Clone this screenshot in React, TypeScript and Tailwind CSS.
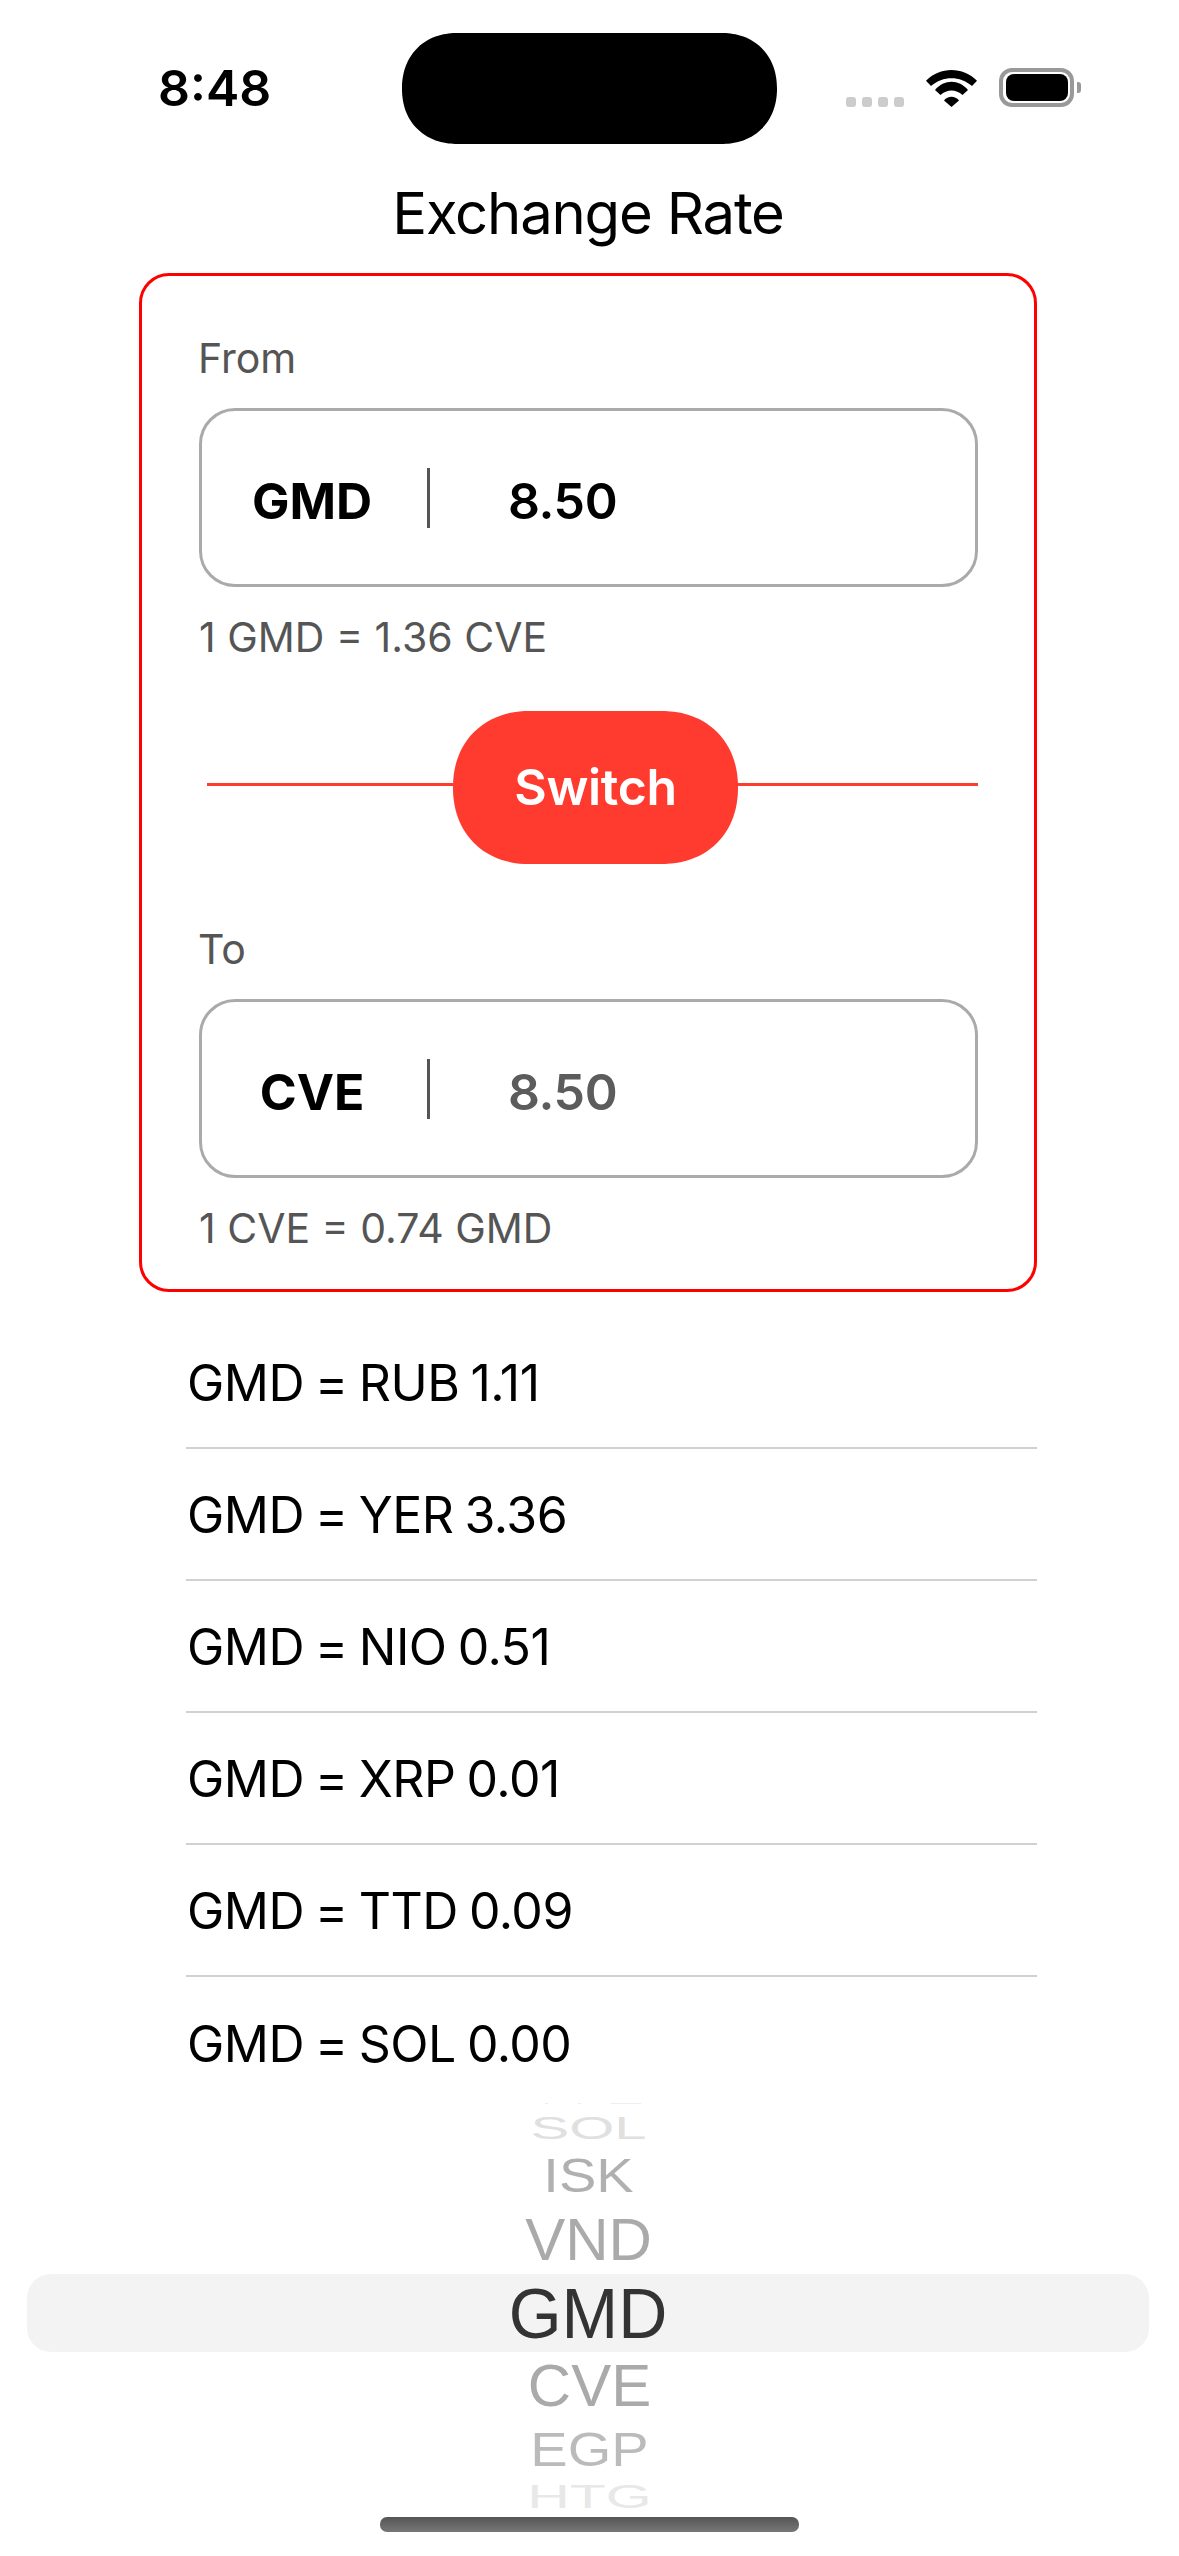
const font = { fontFamily: "Inter, 'Noto Sans', sans-serif" };

const rates = [
  "GMD = RUB 1.11",
  "GMD = YER 3.36",
  "GMD = NIO 0.51",
  "GMD = XRP 0.01",
  "GMD = TTD 0.09",
  "GMD = SOL 0.00",
];

function StatusBar() {
  return (
    <div className="flex h-[144px] shrink-0 items-start pt-[33px]">
      <div className="ml-[158px] w-[244px] pt-[32px] text-[50px] leading-[46px] font-semibold text-black">8:48</div>
      <div className="h-[111px] w-[375px] rounded-[55px] bg-black [corner-shape:superellipse(1.1)]" />
      <div className="flex items-end pt-[35px]">
        <div className="ml-[69px] flex gap-[6px]">
          <span className="h-[10px] w-[10px] rounded-[3px] bg-[#cccccc]" />
          <span className="h-[10px] w-[10px] rounded-[3px] bg-[#cccccc]" />
          <span className="h-[10px] w-[10px] rounded-[3px] bg-[#cccccc]" />
          <span className="h-[10px] w-[10px] rounded-[3px] bg-[#cccccc]" />
        </div>
        <svg className="ml-[22px]" width="51" height="37" viewBox="0 0 51 37" fill="black">
          <path d="M0 10.7C14 -3.5 37 -3.5 51 10.7L46 16C34 5.5 17 5.5 5 16Z" />
          <path d="M9 20C18 9 33 9 42 20L36.5 25C30 19 21 19 14.5 25Z" />
          <path d="M18 30.5C22 25.5 29 25.5 33 30.5L25.5 37Z" />
        </svg>
        <div className="ml-[22px] flex items-center">
          <div className="flex h-[39px] w-[75px] items-center justify-center rounded-[13px] border-[4px] border-[#999999]">
            <div className="h-[27px] w-[62px] rounded-[8px] bg-black" />
          </div>
          <div className="ml-[3px] h-[11px] w-[4px] rounded-r-[3px] bg-[#999999]" />
        </div>
      </div>
    </div>
  );
}

function CurrencyField({
  label,
  code,
  value,
  rate,
  valueClass,
}: {
  label: string;
  code: string;
  value: string;
  rate: string;
  valueClass: string;
}) {
  return (
    <div>
      <div className="-ml-[1px] h-[48px] text-[41px] leading-[48px] text-[#555555]">{label}</div>
      <div className="mt-[26px] -mr-[1px] flex h-[179px] items-center rounded-[36px] border-[3px] border-[#aaaaaa]">
        <div className="w-[220px] pt-[7px] text-center text-[50px] font-bold text-black">{code}</div>
        <div className="ml-[5px] h-[60px] w-[3px] bg-[#555555]" />
        <div className={`ml-[78px] pt-[7px] text-[50px] font-semibold tracking-[-0.4px] ${valueClass}`}>{value}</div>
      </div>
      <div className="mt-[26px] h-[48px] text-[41px] leading-[48px] text-[#555555]">{rate}</div>
    </div>
  );
}

function Picker() {
  return (
    <div className="-mt-[6px] flex shrink-0 flex-col font-['Liberation_Sans']">
      <div className="flex h-[1px] justify-center gap-[30px] pl-[6px]">
        <span className="w-[3px] bg-[#eeeeee]" />
        <span className="w-[3px] bg-[#eeeeee]" />
        <span className="w-[30px] bg-[#eeeeee]" />
      </div>
      <div className="flex h-[47px] items-center justify-center pr-[2px] text-[#e0e0e0]">
        <span className="inline-block scale-y-[0.55] text-[58px] leading-none">SOL</span>
      </div>
      <div className="flex h-[48px] items-center justify-center pr-[2px] text-[#b0b0b0]">
        <span className="inline-block scale-y-[0.87] text-[56px] leading-none">ISK</span>
      </div>
      <div className="flex h-[74.5px] items-center justify-center pt-[6.5px] pr-[2px] text-[#aaaaaa]">
        <span className="inline-block text-[60px] leading-none">VND</span>
      </div>
      <div className="mr-[30px] ml-[27px] flex h-[78px] items-center justify-center rounded-[24px] bg-[#f3f3f3] text-[#333333]">
        <span className="inline-block scale-y-[1.03] text-[68px] leading-none">GMD</span>
      </div>
      <div className="flex h-[74.5px] items-center justify-center pb-[6.5px] text-[#aaaaaa]">
        <span className="inline-block text-[60px] leading-none">CVE</span>
      </div>
      <div className="flex h-[47px] items-center justify-center text-[#bbbbbb]">
        <span className="inline-block scale-y-[0.85] text-[56px] leading-none">EGP</span>
      </div>
      <div className="flex h-[49px] items-center justify-center text-[#e8e8e8]">
        <span className="inline-block scale-y-[0.55] text-[59px] leading-none">HTG</span>
      </div>
    </div>
  );
}

export default function App() {
  return (
    <div className="relative flex h-[2556px] w-[1179px] flex-col overflow-hidden bg-white" style={font}>
      <StatusBar />

      <div className="flex h-[129px] shrink-0 items-center justify-center pt-[8px] pr-[3px] text-[58px] leading-none tracking-[-1.2px] text-black">
        Exchange Rate
      </div>

      <div className="ml-[139px] h-[1019px] w-[898px] shrink-0 rounded-[30px] border-[3px] border-[#ff0000] px-[57px] pt-[58px]">
        <CurrencyField label="From" code="GMD" value="8.50" rate="1 GMD = 1.36 CVE" valueClass="text-black" />

        <div className="mt-[50px] -mr-[1px] ml-[8px] flex h-[153px] items-center">
          <div className="mb-[7px] h-[3px] w-[246px] bg-[#ff3b30]" />
          <button className="flex h-[153px] w-[285px] items-center justify-center rounded-[76px] bg-[#ff3b30] text-[50px] font-semibold tracking-[-0.3px] text-white [corner-shape:superellipse(1.1)]">
            Switch
          </button>
          <div className="mb-[7px] h-[3px] flex-1 bg-[#ff3b30]" />
        </div>

        <div className="mt-[61px]">
          <CurrencyField label="To" code="CVE" value="8.50" rate="1 CVE = 0.74 GMD" valueClass="text-[#5c5c5c]" />
        </div>
      </div>

      <div className="mt-[25px] ml-[186px] w-[851px] shrink-0">
        {rates.map((rate, index) => (
          <div
            key={rate}
            className={`flex h-[132px] items-center pt-[2px] pl-[1px] text-[50px] tracking-[-0.5px] [word-spacing:-2.5px] text-black ${
              index < rates.length - 1 ? "border-b-2 border-[#d1d1d3]" : ""
            }`}
          >
            {rate}
          </div>
        ))}
      </div>

      <Picker />

      <div className="absolute top-[2517px] left-[380px] h-[15px] w-[419px] rounded-[7px] bg-gradient-to-b from-[#555555] to-[#777777]" />
    </div>
  );
}
